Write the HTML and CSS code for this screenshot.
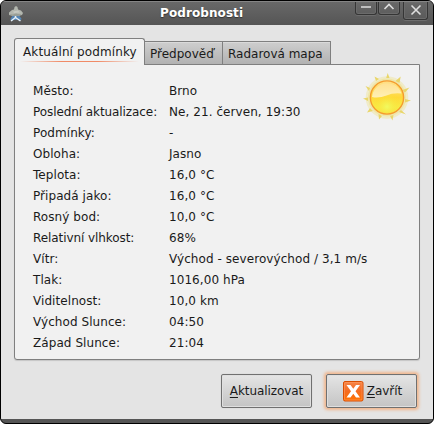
FILE: index.html
```
<!DOCTYPE html>
<html lang="cs">
<head>
<meta charset="utf-8">
<title>Podrobnosti</title>
<link rel="stylesheet" href="styles.css">
</head>
<body>
<div class="window">
  <header class="titlebar">
    <svg class="app-icon" width="16" height="17" viewBox="0 0 16 17">
      <path d="M6 10L3.500 14M9.500 10L12.500 14M7.500 10v4" stroke="#5687b5" stroke-width="3"/>
      <path d="M7.500 9.500v3M7.500 11.500L3 15M7.500 11.500L12.500 15" stroke="#e6f2fb" stroke-width="1.500" fill="none"/>
      <path d="M6.500 1L8 0L9.500 1L10 3.500L13 4.500L15 7L14 9L10 10H5L1 9V6.500L4 4L6 3.500z" fill="#b3b7af"/>
      <path d="M1 8L5 10H10L14 8.500L10 8L8 7.500L5 8.500z" fill="#989e96"/>
      <path d="M5 5.500L10 4.500L12 6.500L6 7z" fill="#c6c9c1"/>
    </svg>
    <h1 class="title">Podrobnosti</h1>
    <div class="controls">
      <span class="control"><svg width="12" height="12" viewBox="0 0 12 12"><path d="M1 7h10" /></svg></span>
      <span class="control"><svg width="12" height="12" viewBox="0 0 12 12"><path d="M1.500 9L6 4.500L10.500 9" /></svg></span>
      <span class="control control-close"><svg width="12" height="12" viewBox="0 0 12 12"><path d="M1.500 1.500L10.500 10.500M10.500 1.500L1.500 10.500" /></svg></span>
    </div>
  </header>
  <main class="content">
    <nav class="tabs">
      <span class="tab tab-active">Aktuální podmínky</span>
      <span class="tab tab-forecast">Předpověď</span>
      <span class="tab tab-radar">Radarová mapa</span>
    </nav>
    <section class="panel">
      <dl class="details">
        <dt>Město:</dt><dd>Brno</dd>
        <dt class="snug">Poslední aktualizace:</dt><dd>Ne, 21. červen, 19:30</dd>
        <dt>Podmínky:</dt><dd>-</dd>
        <dt>Obloha:</dt><dd>Jasno</dd>
        <dt>Teplota:</dt><dd>16,0 °C</dd>
        <dt>Připadá jako:</dt><dd>16,0 °C</dd>
        <dt>Rosný bod:</dt><dd>10,0 °C</dd>
        <dt class="snug">Relativní vlhkost:</dt><dd>68%</dd>
        <dt>Vítr:</dt><dd>Východ - severovýchod / 3,1 m/s</dd>
        <dt>Tlak:</dt><dd>1016,00 hPa</dd>
        <dt>Viditelnost:</dt><dd>10,0 km</dd>
        <dt>Východ Slunce:</dt><dd>04:50</dd>
        <dt>Západ Slunce:</dt><dd>21:04</dd>
      </dl>
      <svg class="sun" width="48" height="48" viewBox="0 0 48 48">
        <defs>
          <linearGradient id="disc" x1="0" y1="0" x2="0" y2="1"><stop offset="0" stop-color="#ffe08a"/><stop offset=".5" stop-color="#ffd93a"/><stop offset=".8" stop-color="#f7ee48"/><stop offset="1" stop-color="#fbdc45"/></linearGradient>
          <radialGradient id="glow" cx=".5" cy=".8" r=".5"><stop offset="0" stop-color="#f1fa60"/><stop offset="1" stop-color="#ffd624" stop-opacity="0"/></radialGradient>
          <linearGradient id="gloss" x1="0" y1="0" x2="0" y2="1"><stop offset="0" stop-color="#ffe293"/><stop offset="1" stop-color="#fff0b5"/></linearGradient>
        </defs>
        <circle cx="24" cy="24.500" r="21.300" fill="#f0ebc8"/>
        <circle cx="24" cy="24.500" r="19" fill="#efe6a8"/>
        <path fill="#e9d66a" d="M23.200 5L24.700 0L26.500 5zM32.500 8L37.700 3.500L36.500 10zM39.500 17L46.500 14.500L42 19.500zM42 26L48 27.500L42 29.500zM38 37L43 41.500L36 39zM27 43L29.500 47.500L30.500 42zM15.500 41L16 46.500L19 43zM7 35L4 39.500L10 38zM5 24.500L0 25.500L5 28zM7 15L2.500 13L6 18zM13 8L11.500 3.500L16 6z"/>
        <circle cx="24" cy="24.500" r="16.600" fill="url(#disc)" stroke="#f59b2d" stroke-width="1.400"/>
        <circle cx="24" cy="24.500" r="15.300" fill="url(#glow)"/>
        <path d="M9 24A15.200 15.200 0 0 1 38.500 20.500Q30 19.500 23.500 22.500Q16 25.500 9 24z" fill="url(#gloss)"/>
      </svg>
    </section>
    <footer class="actions">
      <button class="button"><span class="snug"><u>A</u>ktualizovat</span></button>
      <button class="button button-focus">
        <svg width="21" height="21" viewBox="0 0 21 21">
          <defs><linearGradient id="orange" x1="0" y1="0" x2="0" y2="1"><stop offset="0" stop-color="#f5854a"/><stop offset=".5" stop-color="#f46b20"/><stop offset="1" stop-color="#ff7200"/></linearGradient></defs>
          <rect x=".5" y=".5" width="19.500" height="19.500" rx="1.500" fill="url(#orange)" stroke="#d94d00"/>
          <rect x="1.500" y="1.500" width="17.500" height="17.500" rx="1" fill="none" stroke="#ff9b60" stroke-opacity=".6"/>
          <path d="M3.500 4H7.500L10.300 7.800L13 4H17L12.500 10.200L17 16.500H13L10.300 12.700L7.500 16.500H3.500L8 10.200z" fill="#fff"/>
        </svg>
        <span><u>Z</u>avřít</span>
      </button>
    </footer>
  </main>
</div>
</body>
</html>
```
FILE: styles.css
```
* { box-sizing: border-box; }

body {
  margin: 0;
  background: #fff;
  color: #1a1a1a;
  font: 12px/21px "DejaVu Sans", sans-serif;
}

.window {
  width: 434px;
  height: 424px;
  display: flex;
  flex-direction: column;
  overflow: hidden;
  border: 1px solid #000;
  border-radius: 6px;
  background: #555;
}

.titlebar {
  height: 24px;
  flex: none;
  display: flex;
  align-items: flex-start;
  border-top: 1px solid #858585;
  background: linear-gradient(#686868, #555);
}

.app-icon { margin: 4px 0 0 7px; }

.title {
  flex: 1;
  margin: 0 0 0 136px;
  color: #fff;
  font-size: 12px;
  line-height: 22px;
  letter-spacing: 0.09px;
  text-shadow: 0 1px 1px #333;
}

.controls { display: flex; padding-right: 5px; }

.control {
  width: 22px;
  height: 13px;
  margin-right: 1px;
  display: flex;
  justify-content: center;
  border: 1px solid #353535;
  border-top: 0;
  border-radius: 0 0 3px 3px;
  box-shadow: inset 0 0 0 1px #6b6b6b, 0 1px #6d6d6d;
}

.control svg { fill: none; stroke: #dedede; stroke-width: 1.6; margin-top: -2px; }

.control-close {
  width: 25px;
  height: 18px;
  margin: 0 0 0 2px;
}

.control-close svg { margin-top: 2px; }

.content {
  height: 394px;
  padding: 13px 13px 0;
  background: #e4e4e4;
}

.tabs { height: 26px; display: flex; align-items: flex-end; }

.tab {
  height: 24px;
  line-height: 24px;
  padding-left: 5px;
  white-space: nowrap;
  border: 1px solid #7f7f7f;
  border-left: 0;
  background: linear-gradient(#cecece, #b2b2b2);
  box-shadow: inset 0 1px #dadada;
}

.tab-active {
  position: relative;
  z-index: 1;
  width: 131px;
  height: 27px;
  margin-bottom: -1px;
  padding-left: 8px;
  border-left: 1px solid #7f7f7f;
  border-bottom: 0;
  border-radius: 3px 3px 0 0;
  background: #f1f1f1;
  box-shadow: none;
  line-height: 26px;
  letter-spacing: 0.12px;
}

.tab-active::after {
  content: "";
  position: absolute;
  left: 5px;
  right: 5px;
  bottom: 3px;
  height: 1px;
  background: linear-gradient(90deg, #f08a6600, #f08a66 35%, #f08a66 65%, #f08a6600);
}

.tab-forecast { width: 78px; margin-bottom: -1px; }
.tab-radar { width: 108px; margin-bottom: -1px; }

.panel {
  height: 296px;
  display: flex;
  justify-content: space-between;
  padding: 16px 8px 0 18px;
  border: 1px solid #7f7f7f;
  border-radius: 0 0 3px 3px;
  background: #f1f1f1;
  box-shadow: 0 1px 1px #c5c5c5;
}

.details {
  flex: 1;
  min-width: 0;
  display: grid;
  grid-template-columns: 136px minmax(0, 1fr);
  grid-auto-rows: 21px;
  margin: 0;
  white-space: nowrap;
  letter-spacing: 0.07px;
}

.details dd { margin: 0; }

.snug { letter-spacing: -0.08px; }

.sun { flex: none; margin-top: -8px; }

.actions { display: flex; justify-content: flex-end; gap: 14px; padding: 14px 3px 0 0; }

.button {
  width: 91px;
  height: 34px;
  display: flex;
  align-items: center;
  justify-content: center;
  gap: 4px;
  padding: 0;
  border: 1px solid #707070;
  border-radius: 2px;
  background: linear-gradient(#e5e5e5, #d4d4d4 50%, #c4c4c4);
  box-shadow: inset 0 0 0 1px #dfdfdf, 0 0 1px #bbb;
  color: #1a1a1a;
  font: inherit;
}

.button u { text-underline-offset: 2px; text-decoration-skip-ink: none; }

.button-focus {
  gap: 3px;
  padding-left: 2px;
  box-shadow: inset 0 0 0 1px #dfdfdf, 0 0 3px 2px #f0b68e;
}
```
